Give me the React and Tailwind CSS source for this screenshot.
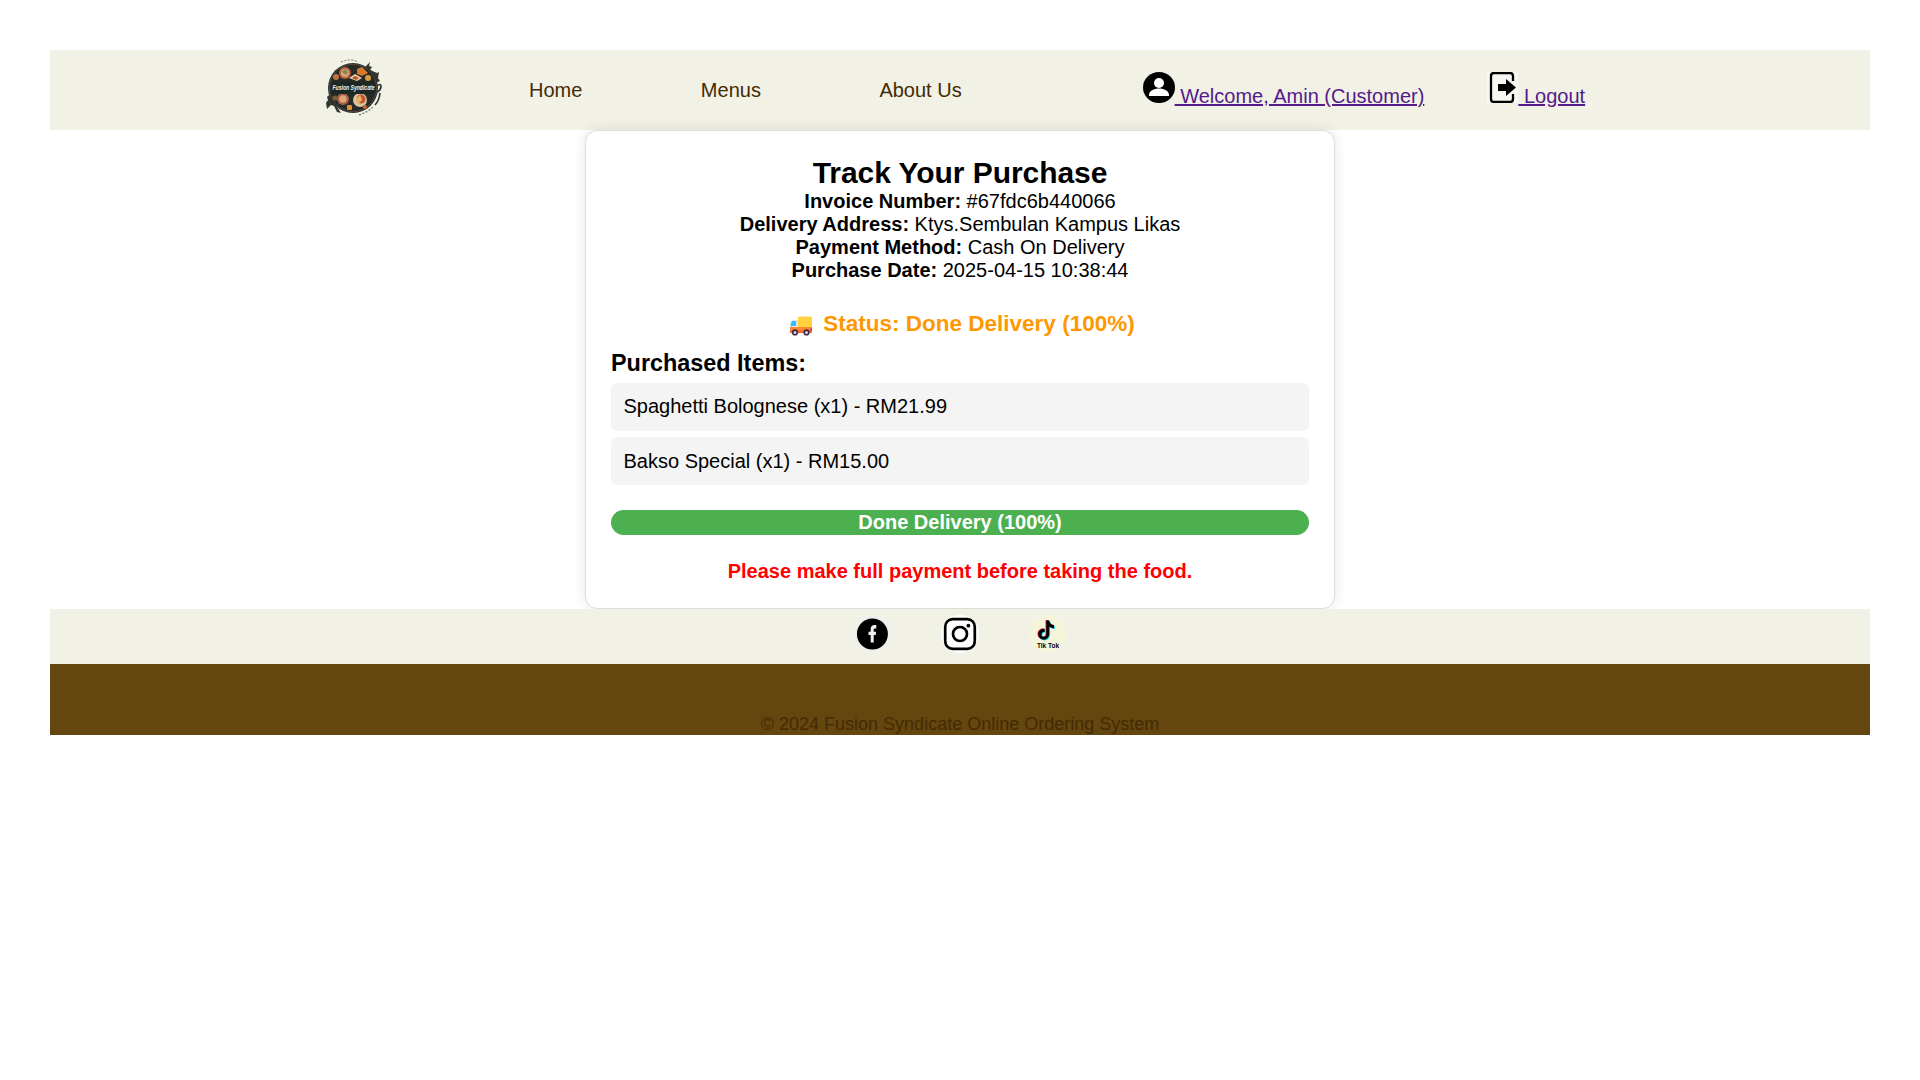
const details = [
  ['Invoice Number:', '#67fdc6b440066'],
  ['Delivery Address:', 'Ktys.Sembulan Kampus Likas'],
  ['Payment Method:', 'Cash On Delivery'],
  ['Purchase Date:', '2025-04-15 10:38:44'],
];

const items = ['Spaghetti Bolognese (x1) - RM21.99', 'Bakso Special (x1) - RM15.00'];

function Logo() {
  return (
    <svg viewBox="0 0 62 62" className="mb-1 ml-[273px] size-[62px] shrink-0">
      <path d="M42 10l5-5-1 4 3 1-2 3 7 3 2-1-1 6 2 3-5 2zM6 38l-2 2 1 3-2 3 1 6 4-4 3 1 3 6 4 1z" fill="#34352f" />
      <path d="M53 30q5-5 5 0-1 4-4 5M57 36q-1 8-5 12" fill="none" stroke="#34352f" strokeWidth="1.7" />
      <circle cx="30" cy="31" r="25" fill="#272a27" />
      <circle cx="30" cy="31" r="23.7" fill="none" stroke="#534a40" strokeWidth="1" />
      <path d="M18 5Q27 1 35 5" fill="none" stroke="#77776e" strokeWidth="1" strokeDasharray="2 1.5" />
      <path d="M36 58q9-3 14-8" fill="none" stroke="#77776e" strokeWidth="1.3" strokeDasharray="2 1.5" />
      <circle cx="22" cy="16" r="6" fill="#bd5f3d" />
      <circle cx="22" cy="16" r="4" fill="#d9a578" />
      <path d="M19 15l3-3 3 3-2 3z" fill="#7c8e4e" />
      <path d="M34 12l5-2 6 6-6 3-5-2z" fill="#d5782d" />
      <path d="M26 21l6-4 7 4-5 3z" fill="#ead1a4" />
      <path d="M29 21l3-2 4 2-3 2z" fill="#b84e32" />
      <circle cx="13" cy="20" r="3" fill="#bd7440" />
      <circle cx="45" cy="21" r="3" fill="#dc9b38" />
      <circle cx="20" cy="42" r="6" fill="#a66148" />
      <circle cx="20" cy="42" r="3.7" fill="#dca477" />
      <circle cx="37" cy="43" r="7" fill="#d7c6a2" />
      <circle cx="38" cy="42" r="4.5" fill="#c55235" />
      <path d="M32 43l5-5 2 5-4 4z" fill="#e5b764" />
      <rect x="24" y="48" width="5" height="5" rx="1" fill="#dc9135" />
      <circle cx="12" cy="41" r="2.5" fill="#7d5d37" />
      <circle cx="42" cy="50" r="2" fill="#c7673d" />
      <rect x="9" y="24.5" width="43" height="12.5" fill="#1d2825" />
      <text x="30.5" y="32.7" textAnchor="middle" textLength="42" lengthAdjust="spacingAndGlyphs" fill="#f5f5ef" fontSize="6.3" fontWeight="700" fontStyle="italic">Fusion Syndicate</text>
    </svg>
  );
}

function UserIcon() {
  return (
    <svg viewBox="0 0 32 31" className="inline-block h-[31px] w-8 align-baseline">
      <ellipse cx="16" cy="15.5" rx="16" ry="15.5" />
      <circle cx="16" cy="11" r="5" fill="white" />
      <path d="M6 24v-1c0-4 5-6.4 10-6.4S26 19 26 23v1z" fill="white" />
    </svg>
  );
}

function LogoutIcon() {
  return (
    <svg viewBox="0 0 31 31" className="inline-block size-[31px] align-baseline">
      <path d="M0 0h31v31H0z" fill="#f7f7f4" />
      <path d="M26 9V4q0-3-3-3H7Q4 1 4 4v23q0 3 3 3h16q3 0 3-3v-5" fill="none" stroke="black" strokeWidth="2.3" />
      <path d="M11 12h8V7l10 8.5L19 24v-5h-8z" />
    </svg>
  );
}

function Truck() {
  return (
    <svg viewBox="0 0 24 20" className="mr-[10px] mt-[3px] h-5 w-6">
      <path d="M9 2q0-1.5 1.5-1.5h11Q23 .5 23 2v10H9z" fill="#ffd23e" />
      <path d="M1 11V8l1-3q.4-1 1.5-1H9v8H1z" fill="#d9e6ed" />
      <path d="M1.5 10l1-4q.3-1 1-1H7v5z" fill="#36bdf5" />
      <path d="M1 11h22v5q0 1-1 1H2q-1 0-1-1z" fill="#ff8731" />
      <path d="M1 14.5h22V16q0 1-1 1H2q-1 0-1-1z" fill="#f46a2c" />
      <path d="M21 12.5h2v2.2h-2z" fill="#ed274b" />
      <circle cx="6" cy="16.4" r="2.3" fill="#d7d2de" stroke="#402844" strokeWidth="1.6" />
      <circle cx="17.5" cy="16.4" r="2.3" fill="#d7d2de" stroke="#402844" strokeWidth="1.6" />
    </svg>
  );
}

function Facebook() {
  return (
    <svg viewBox="0 0 38 38" className="size-[38px]">
      <circle cx="19" cy="19" r="18" fill="#efeff0" />
      <circle cx="19.4" cy="19" r="15.5" />
      <path d="M17.7 27.5V20h-2.2v-3.3h2.2v-2.4c0-3.1 1.6-4.2 3.7-4.2h1.9v3.4h-1.4c-1 0-1.2.5-1.2 1.3v1.9h2.4l-.4 3.3h-2v7.5z" fill="#f1f1f1" />
    </svg>
  );
}

function Instagram() {
  return (
    <svg viewBox="0 0 38 38" className="size-[38px]">
      <circle cx="19" cy="19" r="19" fill="white" />
      <rect x="4.2" y="4.2" width="29.6" height="29.6" rx="7.5" fill="white" stroke="black" strokeWidth="2.7" />
      <circle cx="19" cy="19" r="7" fill="none" stroke="black" strokeWidth="2.7" />
      <circle cx="27.4" cy="10.7" r="1.9" />
    </svg>
  );
}

function TikTok() {
  const note = 'M17.3 5.5h2.9c.4 2.7 2.1 4.4 4.8 4.7v3.1c-1.8 0-3.4-.6-4.8-1.5v7.4a5.5 5.5 0 1 1-5.5-5.5l.9.1v3.3a2.4 2.4 0 1 0 1.7 2.3z';
  return (
    <svg viewBox="0 0 38 38" className="size-[38px]">
      <circle cx="19" cy="19" r="18.5" fill="#f5f5da" />
      <path d={note} fill="#f52955" transform="translate(-.8 -.4)" />
      <path d={note} fill="#20d5dd" transform="translate(.9 .7)" />
      <path d={note} />
      <text x="19" y="32.7" textAnchor="middle" textLength="22" lengthAdjust="spacingAndGlyphs" fontSize="6.3" fontWeight="700">Tik Tok</text>
    </svg>
  );
}

export default function App() {
  return (
    <div className="min-h-screen bg-white p-[50px] font-['Liberation_Sans',Arial,sans-serif] text-[20px] leading-[23px] text-black">
      <header className="flex h-20 items-center bg-[#f1f1e6]">
        <Logo />
        <nav className="ml-[144px] flex gap-[118.5px] text-[#432b04]">
          <a>Home</a>
          <a>Menus</a>
          <a>About Us</a>
        </nav>
        <div className="ml-[181px] flex gap-[63px] whitespace-pre text-[#551a8b]">
          <a className="flex items-baseline"><UserIcon /><span className="underline"> Welcome, Amin (Customer)</span></a>
          <a className="flex items-baseline"><LogoutIcon /><span className="underline"> Logout</span></a>
        </div>
      </header>

      <main className="relative mx-auto h-[479px] w-[750px] rounded-[12.5px] border border-[#ddd] bg-white p-[25px] text-center shadow-[0_0_12.5px_rgba(0,0,0,0.1)]">
        <h2 className="text-[30px] font-bold leading-[34px] tracking-[-0.06px]">Track Your Purchase</h2>
        {details.map(([label, value]) => (
          <p key={label}><strong>{label}</strong> {value}</p>
        ))}
        <div className="mt-[29px] flex h-[26px] items-center justify-center pl-[4px] text-[22.5px] font-bold leading-[26px] text-[#ff9800]">
          <Truck />
          <span>Status: Done Delivery (100%)</span>
        </div>
        <h3 className="mt-[13px] text-left text-[23.4px] font-bold leading-[27px]">Purchased Items:</h3>
        <ul className="mt-[6px] flex flex-col gap-[6px] text-left">
          {items.map((item) => (
            <li key={item} className="h-12 rounded-[6.25px] bg-[#f4f4f4] px-[12.5px] pt-[12px] last:pt-[13px]">{item}</li>
          ))}
        </ul>
        <div className="mt-[25px] h-[25px] rounded-[12.5px] bg-[#4caf50] font-bold leading-[25px] text-white">Done Delivery (100%)</div>
        <p className="mt-[25px] font-bold text-[#ff0000]">Please make full payment before taking the food.</p>
      </main>

      <footer>
        <div className="relative flex h-[55px] justify-center gap-[50px] bg-[#f1f1e6] pt-[6px]">
          <Facebook />
          <Instagram />
          <TikTok />
        </div>
        <div className="flex h-[71px] items-end justify-center bg-[#64460f] text-[18px] leading-[21px] text-[#432b04]">
          © 2024 Fusion Syndicate Online Ordering System
        </div>
      </footer>
    </div>
  );
}
